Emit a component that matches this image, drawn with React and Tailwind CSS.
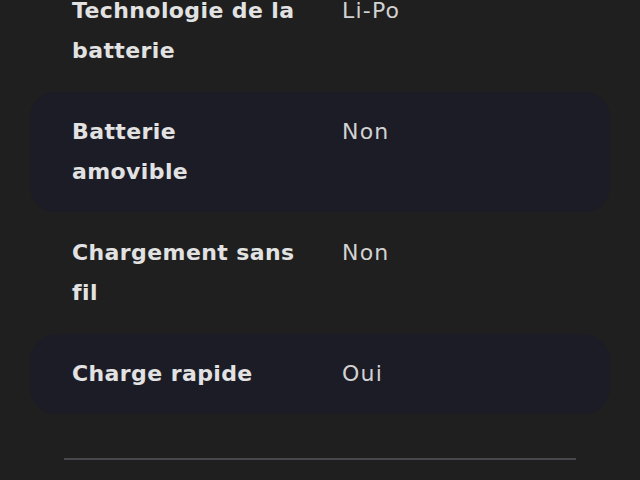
export default function App() {
  const rows = [
    { label: ["Technologie de la", "batterie"], value: "Li-Po", hl: false },
    { label: ["Batterie", "amovible"], value: "Non", hl: true },
    { label: ["Chargement sans", "fil"], value: "Non", hl: false },
    { label: ["Charge rapide"], value: "Oui", hl: true },
  ];
  return (
    <div
      className="w-full h-[480px] overflow-hidden bg-[#1f1f1f]"
      style={{ fontFamily: '"DejaVu Sans", "Noto Sans", sans-serif' }}
    >
      <div className="mt-[-29px] px-[30px] flex flex-col gap-[1px]">
        {rows.map((r) => (
          <div
            key={r.label.join(" ")}
            className={`flex items-start rounded-[26px] py-[20px] pl-[42px] pr-[20px] ${
              r.hl ? "bg-[#1c1c26]" : ""
            }`}
          >
            <div className="w-[240px] mr-[30px] text-[22px] leading-[40px] font-bold tracking-[0.4px] text-[#e2e2e2] whitespace-nowrap">
              {r.label.map((l, i) => (
                <div key={i}>{l}</div>
              ))}
            </div>
            <div className="text-[22px] leading-[40px] font-normal tracking-[1.2px] text-[#d2d2d2]">
              {r.value}
            </div>
          </div>
        ))}
      </div>
      <div className="mx-[64px] mt-[44px] h-[2px] bg-[#48484c]" />
    </div>
  );
}
